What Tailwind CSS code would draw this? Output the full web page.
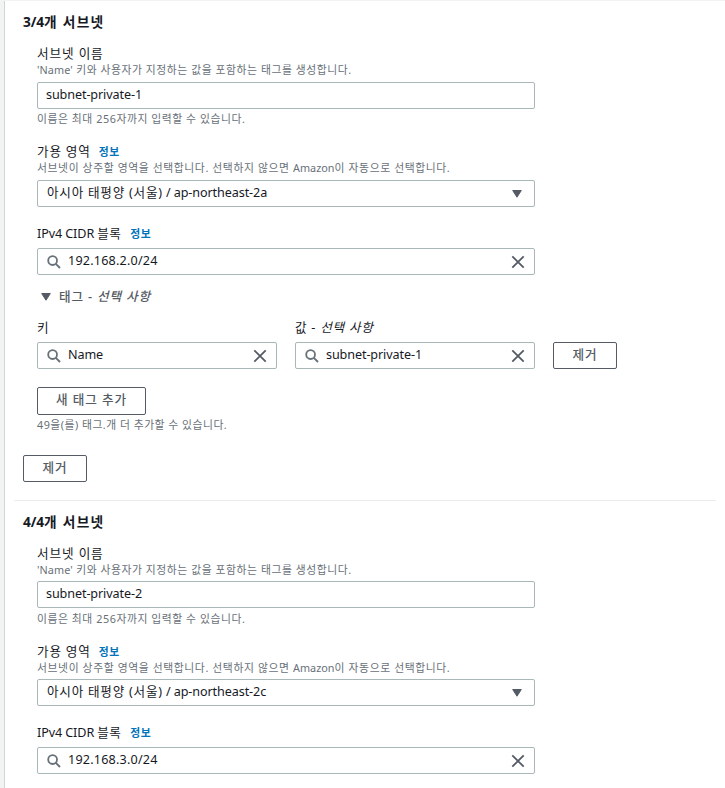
<!DOCTYPE html>
<html lang="ko">
<head>
<meta charset="utf-8">
<title>서브넷 생성</title>
<script src="https://cdn.jsdelivr.net/npm/@tailwindcss/browser@4"></script>
</head>
<body class="h-[788px] overflow-hidden bg-[#f2f3f3] pt-px font-['Noto_Sans','Noto_Sans_CJK_KR',sans-serif] text-[12.6px] tracking-[-0.1px] text-[#16191f]">
<svg class="hidden">
  <symbol id="search" viewBox="0 0 14 14"><circle cx="5.6" cy="5.6" r="4.4" fill="none" stroke="#687078" stroke-width="1.8"/><path d="M8.8 8.8 13 13" stroke="#687078" stroke-width="1.9"/></symbol>
  <symbol id="close" viewBox="0 0 14 14"><path d="M1.3 1.3 12.7 12.7M12.7 1.3 1.3 12.7" stroke="#545b64" stroke-width="1.8"/></symbol>
  <symbol id="caret" viewBox="0 0 10 8"><path d="M.7.5h8.6L5 7.2Z" fill="#545b64" stroke="#545b64" stroke-linejoin="round"/></symbol>
</svg>
<main class="ml-1 h-[787px] border-l border-[#d0d5d5] bg-white">
  <section class="pl-[18px]">
    <h2 class="flex h-11 items-center pb-px text-[13.7px] font-bold"><span>3/4<span class="tracking-[1.3px]">개 서브넷</span></span></h2>
    <div class="w-[594px] pl-3.5">
      <div class="flex h-[18px] items-center whitespace-pre pt-px tracking-[0.9px]">서브넷 이름</div>
      <div class="mb-[5px] flex h-3.5 items-center whitespace-pre text-[10.8px] tracking-[0.56px] text-[#687078]"><span class="tracking-[0.1px]">'Name'</span> 키와 사용자가 지정하는 값을 포함하는 태그를 생성합니다.</div>
      <div class="flex h-[27px] w-[498px] items-center rounded-[2px] border border-[#aab7b8] px-2">subnet-private-1</div>
      <div class="mt-[3px] flex h-3.5 items-center whitespace-nowrap text-[10.8px] tracking-[0.56px] text-[#687078]">이름은 최대 256자까지 입력할 수 있습니다.</div>
      <div class="mt-[17px] flex h-[18px] items-center gap-2 pt-px"><span class="tracking-[0.8px]">가용 영역</span><span class="text-[10.8px] font-bold text-[#0073bb] tracking-[0.6px]">정보</span></div>
      <div class="mb-[5px] flex h-3.5 items-center whitespace-pre text-[10.8px] tracking-[0.61px] text-[#687078]">서브넷이 상주할 영역을 선택합니다. 선택하지 않으면 <span class="tracking-[0.05px]">Amazon</span>이 자동으로 선택합니다.</div>
      <div class="flex h-[27px] w-[498px] items-center justify-between rounded-[2px] border border-[#aab7b8] pr-3 pl-[9px]"><span><span class="tracking-[0.75px]">아시아 태평양 (서울)</span> / ap-northeast-2a</span><svg class="h-2 w-2.5"><use href="#caret"/></svg></div>
      <div class="mt-[17px] mb-1.5 flex h-[18px] items-center gap-[9px] pt-0.5"><span>IPv4 CIDR <span class="tracking-[0.4px]">블록</span></span><span class="text-[10.8px] font-bold text-[#0073bb] tracking-[0.6px]">정보</span></div>
      <div class="flex h-[27px] w-[498px] items-center rounded-[2px] border border-[#aab7b8] pr-[9px] pl-[9px]"><svg class="mr-[7px] size-3.5"><use href="#search"/></svg><span class="grow tracking-[0.2px]">192.168.2.0/24</span><svg class="size-3.5"><use href="#close"/></svg></div>
      <div class="mt-3 flex h-[18px] items-center pt-0.5 pl-1 text-[#545b64]"><svg class="mr-2 h-2 w-2.5"><use href="#caret"/></svg><span class="font-medium tracking-[0.85px]">태그 - <i>선택 사항</i></span></div>
      <div class="mt-[13px] mb-1.5 flex h-[18px] items-center pt-0.5"><span class="w-[258px]">키</span><span class="tracking-[0.75px]">값 - <i>선택 사항</i></span></div>
      <div class="flex gap-[18px]">
        <div class="flex h-[27px] w-60 items-center rounded-[2px] border border-[#aab7b8] px-[9px]"><svg class="mr-[7px] size-3.5"><use href="#search"/></svg><span class="grow">Name</span><svg class="size-3.5"><use href="#close"/></svg></div>
        <div class="flex h-[27px] w-60 items-center rounded-[2px] border border-[#aab7b8] px-[9px]"><svg class="mr-[7px] size-3.5"><use href="#search"/></svg><span class="grow">subnet-private-1</span><svg class="size-3.5"><use href="#close"/></svg></div>
        <button class="flex h-[27px] w-16 items-center justify-center rounded-[2px] border border-[#545b64] font-medium tracking-[0.8px] text-[#545b64]">제거</button>
      </div>
      <button class="mt-[18px] flex h-7 w-[109px] items-center justify-center rounded-[2px] border border-[#545b64] pb-px font-medium tracking-[0.9px] text-[#545b64]">새 태그 추가</button>
      <div class="mt-[3px] flex h-3.5 items-center whitespace-nowrap text-[10.8px] tracking-[0.5px] text-[#687078]">49을(를) 태그.개 더 추가할 수 있습니다.</div>
    </div>
    <button class="mt-[23px] flex h-[27px] w-16 items-center justify-center rounded-[2px] border border-[#545b64] pb-px font-medium tracking-[0.8px] text-[#545b64]">제거</button>
  </section>
  <hr class="mt-[18px] ml-[9px] w-[702px] border-[#eaeded]">
  <section class="pl-[18px]">
    <h2 class="flex h-[43px] items-center pb-px text-[13.7px] font-bold"><span>4/4<span class="tracking-[1.3px]">개 서브넷</span></span></h2>
    <div class="w-[594px] pl-3.5">
      <div class="flex h-[18px] items-center whitespace-pre pt-[3px] tracking-[0.9px]">서브넷 이름</div>
      <div class="mb-[5px] flex h-3.5 items-center whitespace-pre pt-0.5 text-[10.8px] tracking-[0.56px] text-[#687078]"><span class="tracking-[0.1px]">'Name'</span> 키와 사용자가 지정하는 값을 포함하는 태그를 생성합니다.</div>
      <div class="flex h-[27px] w-[498px] items-center rounded-[2px] border border-[#aab7b8] px-2">subnet-private-2</div>
      <div class="mt-[3px] flex h-3.5 items-center whitespace-nowrap pt-0.5 text-[10.8px] tracking-[0.56px] text-[#687078]">이름은 최대 256자까지 입력할 수 있습니다.</div>
      <div class="mt-[17px] flex h-[18px] items-center gap-2 pt-0.5"><span class="tracking-[0.8px]">가용 영역</span><span class="text-[10.8px] font-bold text-[#0073bb] tracking-[0.6px]">정보</span></div>
      <div class="mb-[5px] flex h-3.5 items-center whitespace-pre pt-0.5 text-[10.8px] tracking-[0.61px] text-[#687078]">서브넷이 상주할 영역을 선택합니다. 선택하지 않으면 <span class="tracking-[0.05px]">Amazon</span>이 자동으로 선택합니다.</div>
      <div class="flex h-[27px] w-[498px] items-center justify-between rounded-[2px] border border-[#aab7b8] pr-3 pl-[9px]"><span><span class="tracking-[0.75px]">아시아 태평양 (서울)</span> / ap-northeast-2c</span><svg class="h-2 w-2.5"><use href="#caret"/></svg></div>
      <div class="mt-[17px] mb-1.5 flex h-[18px] items-center gap-[9px] pt-0.5"><span>IPv4 CIDR <span class="tracking-[0.4px]">블록</span></span><span class="text-[10.8px] font-bold text-[#0073bb] tracking-[0.6px]">정보</span></div>
      <div class="flex h-[27px] w-[498px] items-center rounded-[2px] border border-[#aab7b8] pr-[9px] pl-[9px]"><svg class="mr-[7px] size-3.5"><use href="#search"/></svg><span class="grow tracking-[0.2px]">192.168.3.0/24</span><svg class="size-3.5"><use href="#close"/></svg></div>
    </div>
  </section>
</main>
</body>
</html>
